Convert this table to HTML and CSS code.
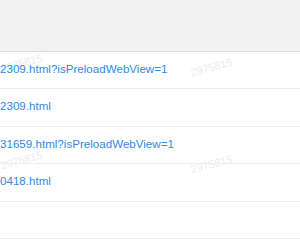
FILE: index.html
```html
<!DOCTYPE html>
<html lang="en">
<head>
  <meta charset="UTF-8">
  <meta name="viewport" content="width=device-width, initial-scale=1.0">
  <title>Preload pages</title>
  <link rel="stylesheet" href="styles.css">
</head>
<body>

  <header class="toolbar"></header>

  <ul class="url-list">
    <li class="url-row"><a href="#">2309.html?isPreloadWebView=1</a></li>
    <li class="url-row"><a href="#">2309.html</a></li>
    <li class="url-row"><a href="#">31659.html?isPreloadWebView=1</a></li>
    <li class="url-row"><a href="#">0418.html</a></li>
    <li class="url-row"></li>
  </ul>

  <!-- user id stamped behind the list -->
  <div class="watermark">
    <span class="mark mark-a">2975815</span>
    <span class="mark mark-b">2975815</span>
    <span class="mark mark-c">2975815</span>
    <span class="mark mark-d">2975815</span>
  </div>

</body>
</html>
```

FILE: styles.css
```css
body {
  font-family: 'Liberation Sans', Arial, sans-serif;
  margin: 0;
  padding: 0;
  background-color: #fff;
  overflow: hidden;
}

.toolbar {
  height: 51px;
  background-color: #f2f2f2;
  border-bottom: 1px solid #dedede;
}

.url-list {
  position: relative;
  z-index: 1;
  list-style: none;
  margin: 0;
  padding: 0;
}

.url-row {
  height: 36.4px;
  line-height: 34px;
  border-bottom: 1px solid #ededed;
  font-size: 11.6px;
  white-space: nowrap;
}

.url-row a {
  color: #2e8ae8;
  text-decoration: none;
}

.watermark {
  position: absolute;
  top: 0;
  left: 0;
  width: 100%;
  height: 100%;
  pointer-events: none;
}

.mark {
  position: absolute;
  font-size: 11px;
  color: #ececec;
  transform: rotate(-15deg);
}

.mark-a { left: 0; top: 57px; }
.mark-b { left: 190px; top: 61px; }
.mark-c { left: 0; top: 154px; }
.mark-d { left: 190px; top: 158px; }
```
